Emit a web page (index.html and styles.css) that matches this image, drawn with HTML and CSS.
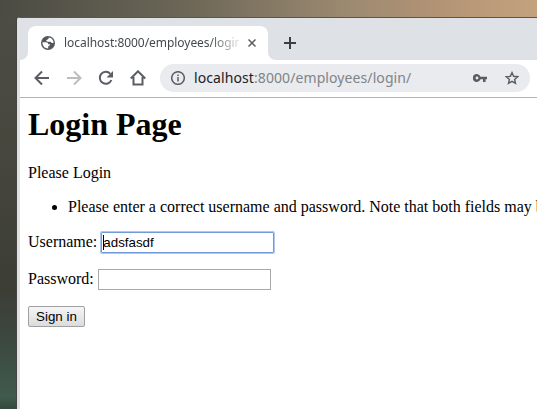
FILE: index.html
```html
<!DOCTYPE html>
<html lang="en">
<head>
<meta charset="utf-8">
<title>Login Page</title>
<link rel="stylesheet" href="styles.css">
</head>
<body>
<div class="desktop">
  <div class="window">
    <div class="tabstrip">
      <div class="tab">
        <svg class="globe" viewBox="0 0 14 14"><circle cx="7" cy="7" r="7" fill="#54585c"/><path d="M1.500 6.300H4.800C6.600 6.300 7.200 7.200 7.200 8.200H9C9 9.900 7.600 9.700 7.200 10.400V12.500C3.800 12.600 1.300 9.900 1.500 6.300Z" fill="#fff"/><path d="M5.300 4.700C5.300 3.300 7.800 3.800 7.800 1.500 10.600 1.700 12.600 4 12.600 6.800 11.700 7.200 10.500 7.200 9.900 6.300 9.400 5.500 8.600 5.900 7.500 5.800 6.300 5.700 5.300 5.500 5.300 4.700Z" fill="#fff"/></svg>
        <span class="title">localhost:8000/employees/login/</span>
        <svg class="close" viewBox="0 0 8 8"><path d="M.5.5l7 7m0-7l-7 7"/></svg>
      </div>
      <svg class="plus" viewBox="0 0 12 12"><path d="M6 0v12M0 6h12"/></svg>
    </div>
    <div class="toolbar">
      <svg class="nav" viewBox="0 0 16 16"><path d="M15 8H2M8 1.500 1.500 8 8 14.500"/></svg>
      <svg class="nav off" viewBox="0 0 16 16"><path d="M1 8h13M8 1.500 14.500 8 8 14.500"/></svg>
      <svg class="nav" viewBox="0 0 16 16"><path d="M13.400 10A6 6 0 1 1 12.300 3.800"/><path class="fill" d="M15 1v6.500H8.500Z"/></svg>
      <svg class="nav" viewBox="0 0 16 16"><path d="M.8 8.500 8 1.300l7.200 7.200M3.500 7v7.500h9V7"/></svg>
      <div class="omnibox">
        <svg class="info" viewBox="0 0 14 14"><circle cx="7" cy="7" r="6.300"/><path d="M7 6v4.500M7 3.400V5"/></svg>
        <span class="url"><b>localhost</b>:8000/employees/login/</span>
        <svg class="key" viewBox="0 0 14 8"><path d="M7.500 2.700A4 4 0 1 0 7.500 5.300H10V8h2.600V5.300H14V2.700ZM4 5.400A1.400 1.400 0 1 1 4 2.600a1.400 1.400 0 0 1 0 2.800Z"/></svg>
        <svg class="star" viewBox="0 0 14 14"><path d="m7 1.600 1.600 3.700 4.100.4-3.100 2.700.9 4L7 10.300l-3.500 2.100.9-4L1.300 5.700l4.100-.4Z"/></svg>
      </div>
    </div>
    <div class="page">
      <h1>Login Page</h1>
      <div>Please Login</div>
      <ul><li>Please enter a correct username and password. Note that both fields may be case-sensitive.</li></ul>
      <div class="field"><span class="label">Username:</span> <span class="input focus"><i class="caret"></i>adsfasdf</span></div>
      <div class="field"><span class="label">Password:</span> <span class="input"></span></div>
      <span class="button">Sign in</span>
    </div>
  </div>
</div>
</body>
</html>
```
FILE: styles.css
```css
* { box-sizing: border-box; }
body { margin: 0; }
svg { flex: none; fill: none; stroke: #5a5e63; }
.desktop {
  width: 537px; height: 409px; overflow: hidden; padding: 17px 0 0 17px;
  background:
    linear-gradient(90deg, #4b4b43, #6c6757 35%, #9b8970 64%, #b39475 82%, #c3a37d) 0 0 / 100% 18px no-repeat,
    linear-gradient(#4d4d45 0, #47473e 35%, #3c3d35 70%, #3c4840 83%, #405a4c 97%, #36483f);
}
.window {
  width: 520px; height: 392px; overflow: hidden;
  border-top: 1px solid #5a554d;
  border-top-left-radius: 3px;
  background: #fff;
  box-shadow: -1px 0 #45453e;
  border-left: 3px solid #dee1e6;
}
.tabstrip { display: flex; height: 42px; padding: 8px 0 0 8px; background: #dee1e6; }
.tab {
  position: relative; display: flex; align-items: center;
  width: 240px; height: 34px; padding-left: 13px;
  background: #fff; border-radius: 8px 8px 0 0;
}
.tab::before, .tab::after { content: ""; position: absolute; bottom: 0; width: 8px; height: 8px; }
.tab::before { left: -8px; background: radial-gradient(circle at 0 0, transparent 7.500px, #fff 8.500px); }
.tab::after { right: -8px; background: radial-gradient(circle at 100% 0, transparent 7.500px, #fff 8.500px); }
.globe { width: 14px; height: 14px; stroke: none; }
.title {
  width: 175px; margin-left: 9px; overflow: hidden; white-space: nowrap;
  font: 12px/18px "Noto Sans", sans-serif; letter-spacing: -.05px; color: #45494d;
  -webkit-mask-image: linear-gradient(90deg, #000 145px, transparent 180px);
  mask-image: linear-gradient(90deg, #000 145px, transparent 180px);
}
.close { width: 8px; height: 8px; margin-left: 9px; stroke-width: 1.500; }
.plus { width: 12px; height: 12px; margin: 11px 0 0 16px; stroke: #3c4043; stroke-width: 2; }
.toolbar {
  display: flex; align-items: center; gap: 16px; height: 38px; padding: 0 7px 1px 14px;
  border-bottom: 1px solid #b0b2b4;
}
.nav { width: 16px; height: 16px; stroke-width: 2; }
.off { stroke: #bbbdbf; }
.fill { fill: #5a5e63; stroke: none; }
.omnibox {
  display: flex; align-items: center; width: 370px; height: 28px;
  margin-left: -2px; padding: 0 11px; border-radius: 14px; background: #e9ebef;
}
.info { width: 14px; height: 14px; stroke-width: 1.500; }
.url { flex: 1; margin-left: 9px; font: 14px/20px "Noto Sans", sans-serif; letter-spacing: .09px; color: #808488; white-space: nowrap; }
.url b { font-weight: 400; color: #202124; }
.key { width: 14px; height: 8px; margin-right: 18px; fill: #5a5e63; stroke: none; }
.star { width: 14px; height: 14px; stroke-width: 1.400; }
.page { padding: 8px; font: 16px/18px "Liberation Serif", serif; color: #000; }
h1 { margin: 0 0 21px; font-size: 32px; line-height: 37px; }
ul { margin: 16px 0; padding-left: 40px; white-space: nowrap; }
.field { display: flex; align-items: center; gap: 4px; height: 21px; margin-bottom: 16px; }
.label { padding-bottom: 2px; }
.input {
  width: 173px; height: 21px; padding: 2px 1px; display: flex; align-items: center;
  border: 1px solid #a9a9a9; font: 13.333px/15px "Liberation Sans", sans-serif;
}
.focus { border-color: #719ada; box-shadow: 0 0 0 1px #abc7f3; border-radius: 1px; }
.caret { width: 1px; height: 15px; margin-right: -1px; background: #000; }
.button {
  display: block; width: 57px; height: 21px; border: 1px solid #a0a0a0; border-radius: 2px;
  background: linear-gradient(#f5f5f5, #dcdcdc); text-align: center;
  font: 13.333px/19px "Liberation Sans", sans-serif;
}
```
